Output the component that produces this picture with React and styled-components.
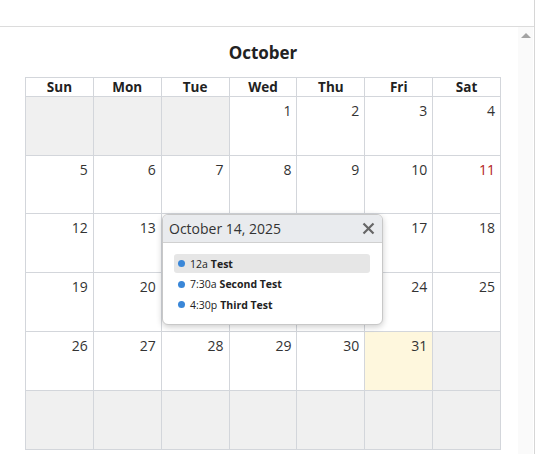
import React from "react";
import styled, { createGlobalStyle } from "styled-components";

const GlobalStyle = createGlobalStyle`
  body {
    margin: 0;
    font-family: "Open Sans", "Liberation Sans", sans-serif;
    background: #fff;
    color: #333;
  }
`;

// 2025-10 starts on Wednesday
const firstDay = 3;
const daysInMonth = 31;
const today = 31;
const redDays = [11];

const events = [
  { time: "12a", title: "Test", active: true },
  { time: "7:30a", title: "Second Test" },
  { time: "4:30p", title: "Third Test" },
];

const weekDays = ["Sun", "Mon", "Tue", "Wed", "Thu", "Fri", "Sat"];

const buildCells = () => {
  const cells = [];
  for (let i = 0; i < 42; i++) {
    const d = i - firstDay + 1;
    cells.push(d >= 1 && d <= daysInMonth ? d : null);
  }
  return cells;
};

const Popover = () => {
  return (
    <PopBox>
      <PopHead>
        <span>October 14, 2025</span>
        <CloseBtn aria-label="close">
          <svg width="13" height="13" viewBox="0 0 13 13">
            <path d="M1.5 1.5 L11.5 11.5 M11.5 1.5 L1.5 11.5" stroke="#666" strokeWidth="2.2" />
          </svg>
        </CloseBtn>
      </PopHead>
      <PopBody>
        {events.map((e) => (
          <EventRow key={e.time} $active={e.active}>
            <Dot />
            <span>{e.time}</span>
            <EventTitle>{e.title}</EventTitle>
          </EventRow>
        ))}
      </PopBody>
    </PopBox>
  );
};

const App = () => {
  const cells = buildCells();
  return (
    <>
      <GlobalStyle />
      <Frame>
        <TopStrip />
        <Content>
          <Main>
            <MonthTitle>October</MonthTitle>
            <Grid>
              {weekDays.map((w) => (
                <HeadCell key={w}>{w}</HeadCell>
              ))}
              {cells.map((d, i) => (
                <DayCell key={i} $empty={d === null} $today={d === today}>
                  {d && <DayNum $red={redDays.includes(d)}>{d}</DayNum>}
                </DayCell>
              ))}
              <Popover />
            </Grid>
          </Main>
          <ScrollTrack>
            <UpArrow />
          </ScrollTrack>
        </Content>
      </Frame>
    </>
  );
};

const Frame = styled.div`
  width: 534px;
  height: 454px;
  border-right: 1px solid #d6d6d6;
  display: flex;
  flex-direction: column;
  overflow: hidden;
`;

const TopStrip = styled.div`
  height: 26px;
  border-bottom: 1px solid #dcdcdc;
  flex-shrink: 0;
`;

const Content = styled.div`
  flex: 1;
  display: flex;
`;

const Main = styled.div`
  width: 518px;
  padding-left: 25px;
  box-sizing: border-box;
`;

const MonthTitle = styled.h2`
  margin: 13px 0 13px;
  width: 476px;
  text-align: center;
  font-size: 17px;
  line-height: 25px;
  font-weight: 700;
  color: #222;
`;

const Grid = styled.div`
  position: relative;
  width: 476px;
  display: grid;
  grid-template-columns: repeat(7, 1fr);
  grid-template-rows: 19px 59px 58px 59px 59px 59px 59px;
  border-left: 1px solid #d3d6db;
  border-top: 1px solid #d3d6db;
  box-sizing: border-box;
  margin-top: -1px;
`;

const HeadCell = styled.div`
  border-right: 1px solid #d3d6db;
  border-bottom: 1px solid #d3d6db;
  text-align: center;
  font-size: 13.5px;
  font-weight: 700;
  line-height: 18px;
  color: #222;
`;

const DayCell = styled.div`
  border-right: 1px solid #d3d6db;
  border-bottom: 1px solid #d3d6db;
  background: ${(p) => (p.$empty ? "#f0f0f0" : p.$today ? "#fef7dd" : "#fff")};
  padding: 2px 5px 0 0;
  text-align: right;
`;

const DayNum = styled.span`
  font-size: 14px;
  line-height: 19px;
  color: ${(p) => (p.$red ? "#b31b1b" : "#333")};
`;

const PopBox = styled.div`
  position: absolute;
  left: 136px;
  top: 136px;
  width: 221px;
  height: 111px;
  box-sizing: border-box;
  background: #fff;
  border: 1px solid #c8c8c8;
  border-radius: 6px;
  box-shadow: 0 2px 6px rgba(0, 0, 0, 0.2);
  overflow: hidden;
  z-index: 2;
`;

const PopHead = styled.div`
  height: 27px;
  background: #e9ebee;
  border-bottom: 1px solid #d0d0d0;
  display: flex;
  align-items: center;
  justify-content: space-between;
  padding: 0 6px 0 6px;
  font-size: 14px;
  color: #333;
`;

const CloseBtn = styled.span`
  display: flex;
  align-items: center;
  margin-right: 1px;
`;

const PopBody = styled.div`
  padding: 11px 12px 0 11px;
`;

const EventRow = styled.div`
  height: 19px;
  margin-bottom: 1.5px;
  display: flex;
  align-items: center;
  gap: 4px;
  padding-left: 4px;
  border-radius: 3px;
  font-size: 10.5px;
  color: #222;
  background: ${(p) => (p.$active ? "#e6e6e6" : "transparent")};
`;

const Dot = styled.span`
  width: 7px;
  height: 7px;
  border-radius: 50%;
  background: #3a87d8;
  margin-right: 1px;
`;

const EventTitle = styled.b`
  font-weight: 700;
  margin-left: -1px;
`;

const ScrollTrack = styled.div`
  width: 15px;
  background: #fafafa;
  display: flex;
  justify-content: center;
  padding-top: 6px;
  box-sizing: border-box;
`;

const UpArrow = styled.span`
  width: 0;
  height: 0;
  border-left: 5px solid transparent;
  border-right: 5px solid transparent;
  border-bottom: 5px solid #a3a3a3;
`;

export default App;
